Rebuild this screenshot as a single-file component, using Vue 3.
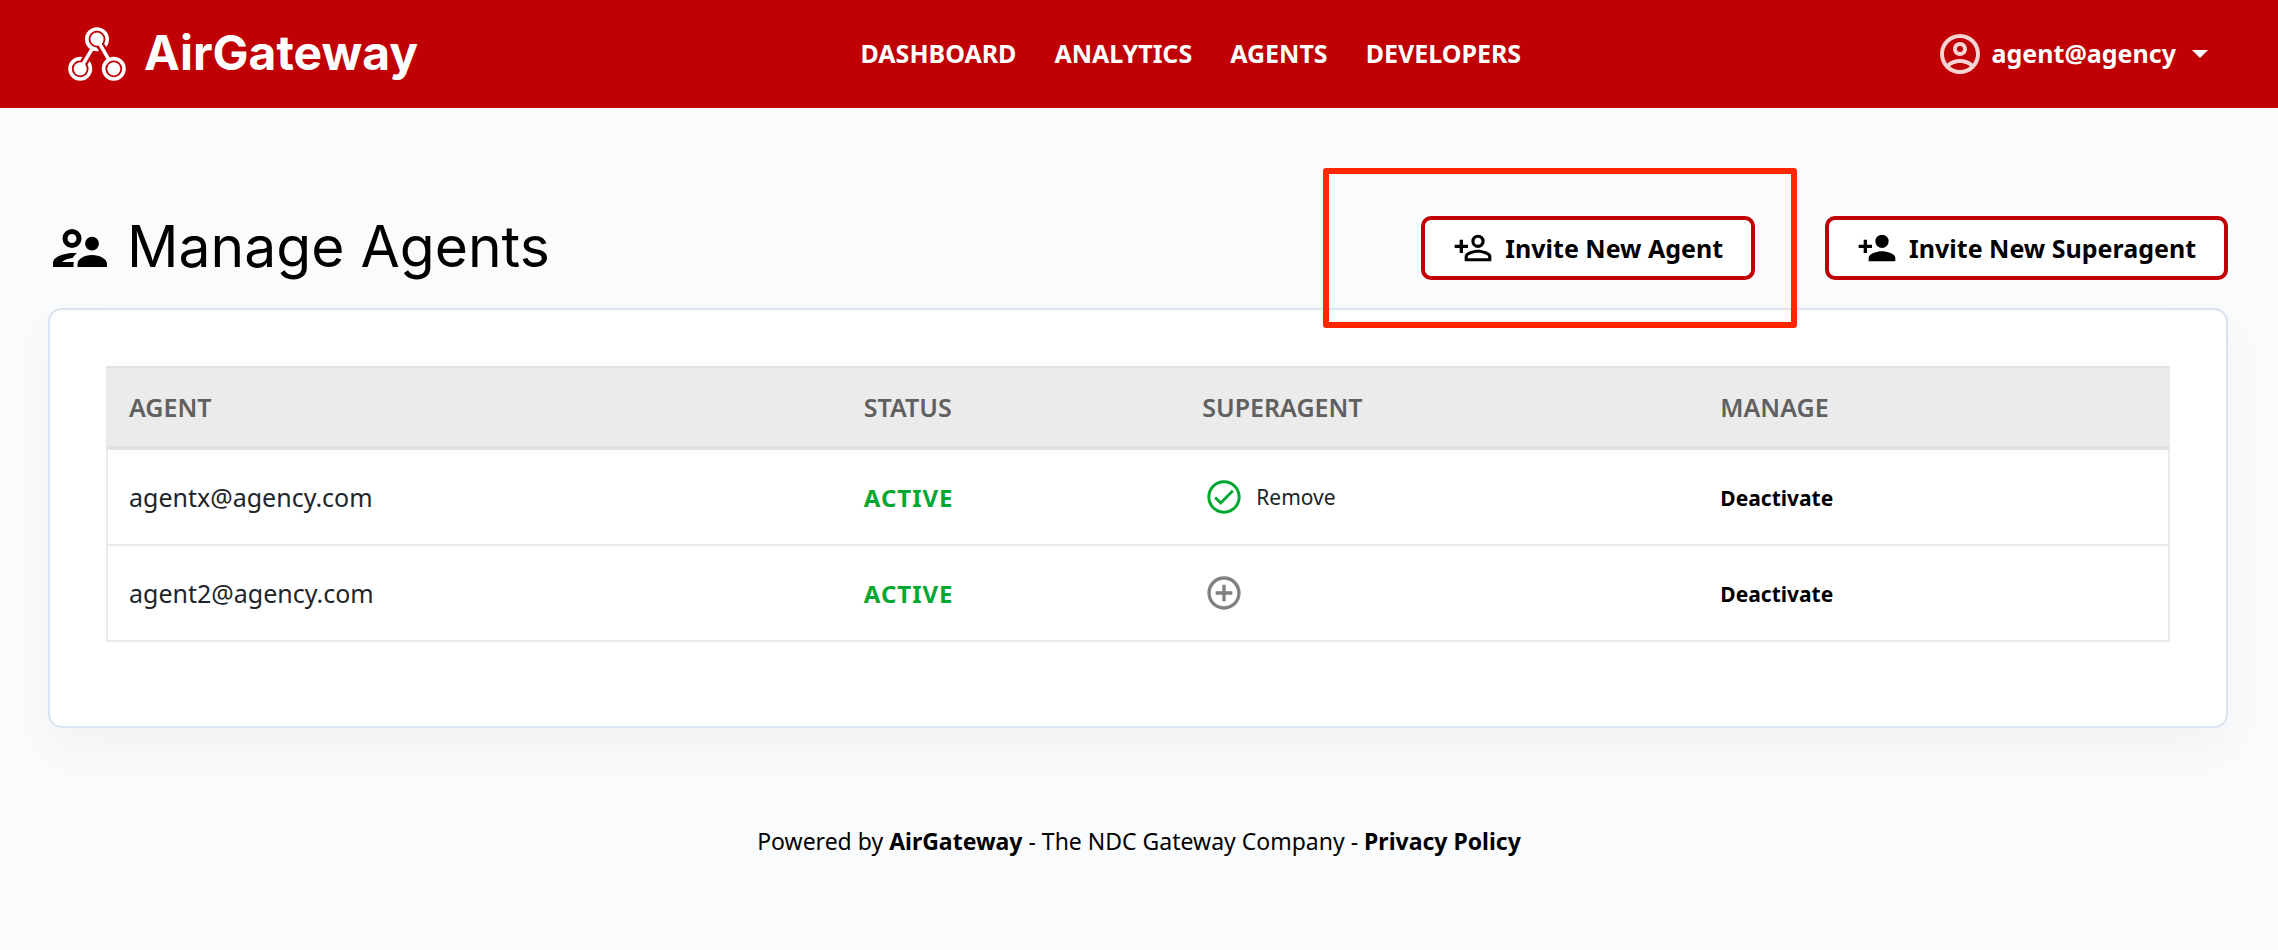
<script setup>
import { ref } from 'vue'

const navLinks = ['DASHBOARD', 'ANALYTICS', 'AGENTS', 'DEVELOPERS']

const agents = ref([
  { email: 'agentx@agency.com', status: 'ACTIVE', superagent: true },
  { email: 'agent2@agency.com', status: 'ACTIVE', superagent: false }
])
</script>

<template>
  <div class="page">
    <header class="topbar">
      <a href="#" class="brand">
        <svg class="brand-mark" viewBox="84 83 174 164" aria-hidden="true">
          <g fill="none" stroke="#fff" stroke-width="11">
            <circle cx="171" cy="120" r="31" />
            <circle cx="120" cy="210" r="31" />
            <circle cx="222" cy="210" r="31" />
          </g>
          <g fill="none" stroke="#c00004" stroke-width="25">
            <path d="M126 200L146 166" />
            <path d="M177 131L191 155" />
          </g>
          <g fill="none" stroke="#fff" stroke-width="11">
            <path d="M120 210L157 148" />
            <path d="M171 120L207 182" />
          </g>
          <g fill="#fff">
            <circle cx="171" cy="120" r="20" />
            <circle cx="120" cy="210" r="20" />
            <circle cx="222" cy="210" r="20" />
          </g>
        </svg>
        <span class="brand-name">AirGateway</span>
      </a>

      <nav class="nav" aria-label="Main">
        <a v-for="link in navLinks" :key="link" href="#" class="nav-link">{{ link }}</a>
      </nav>

      <button type="button" class="account">
        <svg class="account-icon" viewBox="0 0 24 24" aria-hidden="true">
          <path d="M12,2A10,10 0 0,0 2,12A10,10 0 0,0 12,22A10,10 0 0,0 22,12A10,10 0 0,0 12,2M7.07,18.28C7.5,17.38 10.12,16.5 12,16.5C13.88,16.5 16.5,17.38 16.93,18.28C15.57,19.36 13.86,20 12,20C10.14,20 8.43,19.36 7.07,18.28M18.36,16.83C16.93,15.09 13.46,14.5 12,14.5C10.54,14.5 7.07,15.09 5.64,16.83C4.62,15.5 4,13.82 4,12C4,7.59 7.59,4 12,4C16.41,4 20,7.59 20,12C20,13.82 19.38,15.5 18.36,16.83M12,6C10.06,6 8.5,7.56 8.5,9.5C8.5,11.44 10.06,13 12,13C13.94,13 15.5,11.44 15.5,9.5C15.5,7.56 13.94,6 12,6M12,11A1.5,1.5 0 0,1 10.5,9.5A1.5,1.5 0 0,1 12,8A1.5,1.5 0 0,1 13.5,9.5A1.5,1.5 0 0,1 12,11Z" />
        </svg>
        <span class="account-name">agent@agency</span>
        <svg class="caret" viewBox="0 0 16 8" aria-hidden="true"><path d="M0 0H16L8 8Z" /></svg>
      </button>
    </header>

    <main class="content">
      <div class="heading-row">
        <svg class="heading-icon" viewBox="0 0 54 38" aria-hidden="true">
          <circle cx="19" cy="9.5" r="7" fill="none" stroke="#000" stroke-width="5" />
          <circle cx="39" cy="14.7" r="6.9" />
          <path d="M39 26C47 26 54 30 54 35V38H24.5V35C24.5 30 31 26 39 26Z" />
          <path d="M24 24.3C21 24 18 24 15 24.5C7 25.5 0 29 0 34V38H20.5V35C20.5 34.2 20.6 33.6 20.9 33H9C11.5 30.8 15 29.5 19.5 29C20.5 27.2 22 25.7 24 24.3Z" />
        </svg>
        <h1 class="heading">Manage Agents</h1>
        <div class="actions">
          <div class="highlighted">
            <button type="button" class="invite">
              <svg class="invite-icon" viewBox="0 0 24 24" aria-hidden="true">
                <path d="M15,4A4,4 0 0,0 11,8A4,4 0 0,0 15,12A4,4 0 0,0 19,8A4,4 0 0,0 15,4M15,5.9C16.16,5.9 17.1,6.84 17.1,8C17.1,9.16 16.16,10.1 15,10.1A2.1,2.1 0 0,1 12.9,8A2.1,2.1 0 0,1 15,5.9M4,7V10H1V12H4V15H6V12H9V10H6V7H4M15,13C12.33,13 7,14.33 7,17V20H23V17C23,14.33 17.67,13 15,13M15,14.9C17.97,14.9 21.1,16.36 21.1,17V18.1H8.9V17C8.9,16.36 12,14.9 15,14.9Z" />
              </svg>
              Invite New Agent
            </button>
          </div>
          <button type="button" class="invite">
            <svg class="invite-icon" viewBox="0 0 24 24" aria-hidden="true">
              <path d="M15,12A4,4 0 1,0 15,4A4,4 0 0,0 15,12M6,10V7H4V10H1V12H4V15H6V12H9V10H6M15,14C12.33,14 7,15.34 7,18V20H23V18C23,15.34 17.67,14 15,14Z" />
            </svg>
            Invite New Superagent
          </button>
        </div>
      </div>

      <section class="card">
        <table class="agents">
          <colgroup>
            <col class="col-agent" />
            <col class="col-status" />
            <col class="col-super" />
            <col class="col-manage" />
          </colgroup>
          <thead>
            <tr>
              <th scope="col">AGENT</th>
              <th scope="col">STATUS</th>
              <th scope="col">SUPERAGENT</th>
              <th scope="col">MANAGE</th>
            </tr>
          </thead>
          <tbody>
            <tr v-for="agent in agents" :key="agent.email">
              <td>{{ agent.email }}</td>
              <td><span class="status">{{ agent.status }}</span></td>
              <td>
                <button
                  type="button"
                  class="toggle"
                  :aria-label="agent.superagent ? null : 'Make superagent'"
                  @click="agent.superagent = !agent.superagent"
                >
                  <svg v-if="agent.superagent" class="toggle-icon on" viewBox="0 0 24 24" aria-hidden="true">
                    <path d="M12 2C6.48 2 2 6.48 2 12s4.48 10 10 10 10-4.48 10-10S17.52 2 12 2zm0 18.2c-4.53 0-8.2-3.67-8.2-8.2S7.47 3.8 12 3.8s8.2 3.67 8.2 8.2-3.67 8.2-8.2 8.2zm4.7-12.5L10 14.4l-2.7-2.7L6.1 12.9l3.9 3.9 7.9-7.9z" />
                  </svg>
                  <svg v-else class="toggle-icon" viewBox="0 0 24 24" aria-hidden="true">
                    <path d="M13 7h-2v4H7v2h4v4h2v-4h4v-2h-4V7zm-1-5C6.48 2 2 6.48 2 12s4.48 10 10 10 10-4.48 10-10S17.52 2 12 2zm0 18c-4.41 0-8-3.59-8-8s3.59-8 8-8 8 3.59 8 8-3.59 8-8 8z" />
                  </svg>
                  <span v-if="agent.superagent">Remove</span>
                </button>
              </td>
              <td><button type="button" class="deactivate">Deactivate</button></td>
            </tr>
          </tbody>
        </table>
      </section>
    </main>

    <footer class="footer">
      Powered by <a href="#">AirGateway</a> - The NDC Gateway Company - <a href="#">Privacy Policy</a>
    </footer>
  </div>
</template>

<style>
body {
  background: #fafbfd;
}
</style>

<style scoped>
.page {
  font-family: "Noto Sans", sans-serif;
  font-size: 25px;
  line-height: 36px;
  color: #000;
}

.page *,
.page {
  box-sizing: border-box;
}

button {
  margin: 0;
  padding: 0;
  border: 0;
  background: none;
  color: inherit;
  font: inherit;
  cursor: pointer;
}

a {
  color: inherit;
  text-decoration: none;
}

svg {
  display: block;
  flex: none;
}

.topbar {
  display: flex;
  align-items: center;
  justify-content: space-between;
  min-height: 108px;
  padding: 0 70px 0 68px;
  background: #c00004;
  color: #fff;
}

.brand {
  display: flex;
  align-items: center;
  gap: 18px;
}

.brand-mark {
  width: 58px;
  height: 54px;
}

.brand-name {
  padding-bottom: 2px;
  font-family: Inter, sans-serif;
  font-size: 48px;
  font-weight: 700;
  line-height: 56px;
}

.nav {
  display: flex;
  gap: 38px;
  padding-left: 28px;
}

.nav-link {
  padding-bottom: 2px;
  font-weight: 700;
}

.account {
  display: flex;
  align-items: center;
  font-weight: 700;
}

.account-icon {
  width: 48px;
  height: 48px;
  margin-right: 8px;
  fill: #f6d4d4;
}

.account-name {
  padding-bottom: 2px;
}

.caret {
  width: 16px;
  height: 8px;
  margin-left: 16px;
  fill: #fff;
}

.content {
  padding: 108px 50px 0 48px;
}

.heading-row {
  display: flex;
  align-items: center;
  padding-left: 5px;
  margin-bottom: 28px;
}

.heading-icon {
  width: 54px;
  height: 38px;
}

.heading {
  margin: 0 0 0 20px;
  padding-bottom: 2px;
  font-family: Inter, sans-serif;
  font-size: 57px;
  font-weight: 400;
  line-height: 60px;
}

.actions {
  display: flex;
  gap: 70px;
  margin-left: auto;
}

.highlighted {
  position: relative;
}

.highlighted::after {
  content: "";
  position: absolute;
  inset: -48px -42px -48px -98px;
  border: 6px solid #ff2600;
  border-radius: 3px;
  pointer-events: none;
}

.invite {
  display: flex;
  align-items: center;
  gap: 12px;
  height: 64px;
  padding: 0 28px;
  border: 4px solid #c00004;
  border-radius: 10px;
  background: #fff;
  font-weight: 700;
}

.invite-icon {
  width: 40px;
  height: 40px;
}

.card {
  padding: 56px 56px 84px;
  border: 2px solid #d8e4f2;
  border-radius: 14px;
  background: #fff;
  box-shadow: 0 20px 50px rgba(0, 0, 0, 0.04);
}

.agents {
  width: 100%;
  table-layout: fixed;
  border-collapse: separate;
  border-spacing: 0;
}

.col-agent {
  width: 35.6%;
}

.col-status {
  width: 16.4%;
}

.col-super {
  width: 25.1%;
}

.col-manage {
  width: 22.9%;
}

.agents th {
  height: 84px;
  padding: 0 23px;
  border-top: 2px solid #dee2e6;
  border-bottom: 4px solid #dee2e6;
  background: #ebebeb;
  color: #606060;
  font-weight: 600;
  text-align: left;
}

.agents td {
  height: 96px;
  padding: 0 23px;
  border-bottom: 2px solid #ebebeb;
  color: #212529;
}

.agents td:first-child {
  padding-left: 21px;
  border-left: 2px solid #ebebeb;
}

.agents td:last-child {
  border-right: 2px solid #ebebeb;
}

.status {
  color: #00a832;
  font-size: 24px;
  font-weight: 700;
  letter-spacing: 1px;
}

.toggle {
  display: flex;
  align-items: center;
  gap: 12px;
  padding-left: 2px;
  font-size: 21px;
}

.toggle-icon {
  width: 40px;
  height: 40px;
  fill: #808080;
}

.toggle-icon.on {
  fill: #00a832;
}

.deactivate {
  color: #000;
  font-size: 21px;
  font-weight: 700;
}

.footer {
  margin-top: 95px;
  padding: 0 24px;
  font-size: 23px;
  text-align: center;
}

.footer a {
  font-weight: 700;
}
</style>
